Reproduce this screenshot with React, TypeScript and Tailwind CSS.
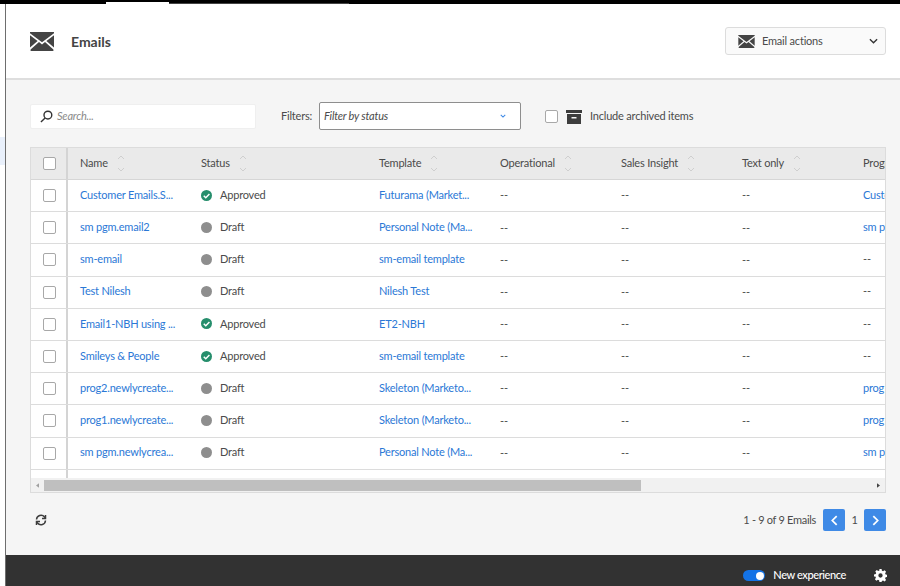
import React from "react";

const font = { fontFamily: '"Lato", "Open Sans", sans-serif' };

function Mail({ className }: { className: string }) {
  return (
    <svg viewBox="0 0 24 19" className={className} fill="#444">
      <path d="M0 0h24v1.2L12 10.2 0 1.2z" />
      <path d="M0 3.2 7.6 9 0 15.6z" />
      <path d="M24 3.2 16.4 9 24 15.6z" />
      <path d="M9 10.1l3 2.3 3-2.3L23.4 17.6V19H.6v-1.4z" />
    </svg>
  );
}

function Box() {
  return <span className="block w-[13px] h-[13px] rounded-[2px] border border-[#a8a8a8] bg-white shrink-0" />;
}

function Sort() {
  return (
    <svg viewBox="0 0 8 17" className="w-[8px] h-[17px] shrink-0" fill="none" stroke="#cfcfcf" strokeWidth="1">
      <path d="M1 4l3-3 3 3" />
      <path d="M1 13l3 3 3-3" />
    </svg>
  );
}

function Check() {
  return (
    <svg viewBox="0 0 12 12" className="w-[11px] h-[11px] shrink-0">
      <circle cx="6" cy="6" r="6" fill="#268e6c" />
      <path d="M3 6.2l2.2 2.2L9.2 4.3" fill="none" stroke="#fff" strokeWidth="1.6" />
    </svg>
  );
}

const cols = ["w-[121px]", "w-[178px]", "w-[121px]", "w-[121px]", "w-[121px]", "w-[121px]", "w-[60px]"];
const headers = ["Name", "Status", "Template", "Operational", "Sales Insight", "Text only", "Program"];

const rows = [
  ["Customer Emails.S...", "Approved", "Futurama (Market...", "Custo"],
  ["sm pgm.email2", "Draft", "Personal Note (Ma...", "sm p"],
  ["sm-email", "Draft", "sm-email template", "--"],
  ["Test Nilesh", "Draft", "Nilesh Test", "--"],
  ["Email1-NBH using ...", "Approved", "ET2-NBH", "--"],
  ["Smileys & People", "Approved", "sm-email template", "--"],
  ["prog2.newlycreate...", "Draft", "Skeleton (Marketo...", "prog"],
  ["prog1.newlycreate...", "Draft", "Skeleton (Marketo...", "prog"],
  ["sm pgm.newlycrea...", "Draft", "Personal Note (Ma...", "sm p"],
];

export default function App() {
  return (
    <div style={font} className="w-[900px] h-[586px] overflow-hidden flex flex-col bg-white text-[11px] tracking-[-0.2px] text-[#4b4b4b]">
      <div className="h-[4px] bg-black flex shrink-0">
        <div className="w-[106px]" />
        <div className="w-[63px] h-[2px] mt-[2px] bg-white" />
        <div className="w-[180px] h-[1px] mt-[3px] bg-[#444]" />
      </div>
      <div className="flex flex-1 min-h-0">
        <div className="w-[5px] flex flex-col pt-[133px] shrink-0 bg-white">
          <div className="h-[28px] bg-[#e9f0fb]" />
        </div>
        <div className="w-[1px] bg-[#6e6e6e] shrink-0" />
        <div className="flex-1 min-w-0 flex flex-col">
          <header className="h-[76px] shrink-0 bg-white border-b-2 border-[#dedede] flex items-center justify-between pl-[24px] pr-[14px]">
            <div className="flex items-center">
              <Mail className="w-[24px] h-[19px]" />
              <span className="ml-[17px] text-[14px] font-bold text-[#444] tracking-normal">Emails</span>
            </div>
            <button className="w-[161px] h-[28px] rounded-[3px] border border-[#dcdcdc] bg-[#fafafa] flex items-center pl-[12px] pr-[7px]">
              <Mail className="w-[17px] h-[13px]" />
              <span className="ml-[7px] flex-1 text-left">Email actions</span>
              <svg viewBox="0 0 10 6" className="w-[9px] h-[6px]" fill="none" stroke="#333" strokeWidth="1.5">
                <path d="M1 1l4 4 4-4" />
              </svg>
            </button>
          </header>
          <main className="flex-1 min-h-0 bg-[#f5f5f5] pl-[24px] pr-[14px] pt-[22px] flex flex-col">
            <div className="flex items-center h-[28px] shrink-0">
              <div className="w-[226px] h-[25px] mt-[1px] bg-white border border-[#efefef] rounded-[2px] flex items-center pl-[9px]">
                <svg viewBox="0 0 14 14" className="w-[13px] h-[13px]" fill="none" stroke="#333" strokeWidth="1.5">
                  <circle cx="8.5" cy="5.5" r="4.2" />
                  <path d="M5.5 8.5L1 13" />
                </svg>
                <span className="ml-[4px] italic text-[#8a8a8a]">Search...</span>
              </div>
              <span className="ml-[25px] w-[30px] whitespace-nowrap">Filters:</span>
              <div className="ml-[8px] w-[202px] h-[28px] border border-[#8e8e8e] rounded-[2px] bg-white flex items-center justify-between pl-[4px] pr-[14px] italic">
                <span>Filter by status</span>
                <svg viewBox="0 0 8 5" className="w-[6px] h-[4px]" fill="none" stroke="#3f8ae6" strokeWidth="1.4">
                  <path d="M1 1l3 3 3-3" />
                </svg>
              </div>
              <span className="ml-[24px] mt-[1px]"><Box /></span>
              <svg viewBox="0 0 16 14" className="ml-[8px] mt-[1px] w-[16px] h-[14px]" fill="#3d3d3d">
                <path d="M0 0h16v3H0z" />
                <path fillRule="evenodd" d="M1 4h14v10H1zM5.500 7v1.500h5V7z" />
              </svg>
              <span className="ml-[8px]">Include archived items</span>
            </div>
            <div className="mt-[17px] w-[856px] h-[346px] border border-[#dcdcdc] bg-white flex flex-col overflow-hidden shrink-0">
              <div className="h-[32px] shrink-0 bg-[#eaeaea] border-b border-[#d6d6d6] flex">
                <div className="w-[37px] pl-[2px] flex items-center justify-center shrink-0 border-r-2 border-[#d4d4d4]"><Box /></div>
                {headers.map((h, i) => (
                  <div key={h} className={`${cols[i]} shrink-0 pl-[12px] pb-[1px] flex items-center gap-[9px] whitespace-nowrap`}>
                    {h}
                    <Sort />
                  </div>
                ))}
              </div>
              {rows.map((r) => (
                <div key={r[0]} className="h-[32.2px] shrink-0 border-b border-[#dcdcdc] flex">
                  <div className="w-[37px] pl-[2px] flex items-center justify-center shrink-0 border-r-2 border-[#d4d4d4]"><Box /></div>
                  <div className={`${cols[0]} shrink-0 pl-[12px] pb-[1px] flex items-center text-[#2b78d6] whitespace-nowrap`}>{r[0]}</div>
                  <div className={`${cols[1]} shrink-0 pl-[12px] pb-[1px] flex items-center whitespace-nowrap`}>
                    {r[1] === "Approved" ? <Check /> : <span className="block w-[11px] h-[11px] rounded-full bg-[#8e8e8e] shrink-0" />}
                    <span className="ml-[8px]">{r[1]}</span>
                  </div>
                  <div className={`${cols[2]} shrink-0 pl-[12px] pb-[1px] flex items-center text-[#2b78d6] whitespace-nowrap`}>{r[2]}</div>
                  <div className={`${cols[3]} shrink-0 pl-[12px] flex items-center`}>--</div>
                  <div className={`${cols[4]} shrink-0 pl-[12px] flex items-center`}>--</div>
                  <div className={`${cols[5]} shrink-0 pl-[12px] flex items-center`}>--</div>
                  <div className={`${cols[6]} shrink-0 pl-[12px] pb-[1px] flex items-center whitespace-nowrap ${r[3] === "--" ? "" : "text-[#2b78d6]"}`}>{r[3]}</div>
                </div>
              ))}
              <div className="flex-1 min-h-0 flex">
                <div className="w-[37px] shrink-0 border-r-2 border-[#d4d4d4]" />
              </div>
              <div className="h-[14px] shrink-0 bg-[#f1f1f1] flex items-center">
                <svg viewBox="0 0 4 6" className="ml-[5px] w-[3px] h-[5px]" fill="#a0a0a0"><path d="M4 0v6L0 3z" /></svg>
                <div className="ml-[5px] w-[597px] h-[11px] bg-[#bfbfbf]" />
                <div className="flex-1" />
                <svg viewBox="0 0 4 6" className="mr-[5px] w-[3px] h-[5px]" fill="#444"><path d="M0 0v6l4-3z" /></svg>
              </div>
            </div>
            <div className="mt-[15px] h-[24px] w-[856px] flex items-center shrink-0">
              <svg viewBox="0 0 24 24" className="ml-[5px] w-[12px] h-[12px]" fill="none" stroke="#3d3d3d" strokeWidth="3">
                <path d="M3 11a9 9 0 0 1 16-5l2 2" />
                <path d="M21 2v7h-7" />
                <path d="M21 13a9 9 0 0 1-16 5l-2-2" />
                <path d="M3 22v-7h7" />
              </svg>
              <span className="ml-auto tracking-[-0.3px]">1 - 9 of 9 Emails</span>
              <span className="ml-[7px] w-[22px] h-[22px] rounded-[2px] bg-[#3f8ae6] flex items-center justify-center">
                <svg viewBox="0 0 8 12" className="w-[7px] h-[11px]" fill="none" stroke="#fff" strokeWidth="2"><path d="M6.500 1l-5 5 5 5" /></svg>
              </span>
              <span className="w-[19px] text-center">1</span>
              <span className="w-[22px] h-[22px] rounded-[2px] bg-[#3f8ae6] flex items-center justify-center">
                <svg viewBox="0 0 8 12" className="w-[7px] h-[11px]" fill="none" stroke="#fff" strokeWidth="2"><path d="M1.500 1l5 5-5 5" /></svg>
              </span>
            </div>
          </main>
          <footer className="h-[31px] shrink-0 bg-[#323232] flex items-center pr-[13px] pt-[10px]">
            <span className="ml-auto w-[22px] h-[11px] rounded-full bg-[#1473e6] flex items-center justify-end pr-[1px]">
              <span className="block w-[8px] h-[8px] rounded-full bg-white" />
            </span>
            <span className="ml-[8px] text-white font-medium tracking-[-0.4px]">New experience</span>
            <svg viewBox="0 0 24 24" className="ml-[28px] w-[13px] h-[13px]" fill="#fff">
              <path fillRule="evenodd" d="M10 0h4l.6 3.200 2.200.9L19.500 2.300l2.800 2.800-1.800 2.700.9 2.200 3.200.6v4l-3.200.6-.9 2.200 1.800 2.700-2.800 2.800-2.700-1.800-2.200.9L14 24h-4l-.6-3.200-2.200-.9-2.700 1.800-2.800-2.800 1.800-2.700-.9-2.200L0 14v-4l3.200-.6.9-2.200L2.300 4.500l2.800-2.800 2.700 1.800 2.200-.9zM12 8a4 4 0 1 0 0 8 4 4 0 0 0 0-8z" />
            </svg>
          </footer>
        </div>
      </div>
    </div>
  );
}
